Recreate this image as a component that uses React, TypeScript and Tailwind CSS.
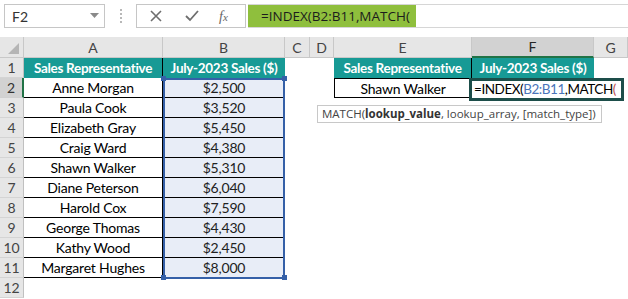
import React from "react";

const names = [
  "Anne Morgan",
  "Paula Cook",
  "Elizabeth Gray",
  "Craig Ward",
  "Shawn Walker",
  "Diane Peterson",
  "Harold Cox",
  "George Thomas",
  "Kathy Wood",
  "Margaret Hughes",
];

const sales = ["$2,500", "$3,520", "$5,450", "$4,380", "$5,310", "$6,040", "$7,590", "$4,430", "$2,450", "$8,000"];

const cols = ["A", "B", "C", "D", "E", "F", "G"];

function FormulaBar() {
  return (
    <div className="flex h-[35px] items-start pt-[4px] pl-[4px]">
      <div className="flex h-[24px] w-[101px] items-center justify-between border border-[#c6c6c6] pl-[7px] pr-[5px] text-[14px] text-[#333]">
        <span>F2</span>
        <svg width="9" height="6" viewBox="0 0 9 6">
          <path d="M0 0 L9 0 L4.5 5 Z" fill="#8a8a8a" />
        </svg>
      </div>
      <div className="flex h-[24px] w-[31px] flex-col items-center justify-center gap-[2px]">
        <span className="h-[2px] w-[2px] bg-[#b8b8b8]" />
        <span className="h-[2px] w-[2px] bg-[#b8b8b8]" />
        <span className="h-[2px] w-[2px] bg-[#b8b8b8]" />
        <span className="h-[2px] w-[2px] bg-[#b8b8b8]" />
      </div>
      <div className="flex h-[24px] w-[110px] items-center border border-[#c6c6c6] pl-[13px]">
        <svg width="12" height="12" viewBox="0 0 12 12">
          <path d="M1 1 L11 11 M11 1 L1 11" stroke="#6e6e6e" strokeWidth="1.6" />
        </svg>
        <svg className="ml-[23px]" width="14" height="12" viewBox="0 0 14 12">
          <path d="M1 6 L5 10 L13 1" stroke="#6e6e6e" strokeWidth="1.8" fill="none" />
        </svg>
        <span className="ml-[20px] font-['Liberation_Serif'] text-[14px] italic text-[#666]">
          f<span className="text-[11px]">x</span>
        </span>
      </div>
      <div className="ml-[2px] flex h-[24px] flex-1 border-y border-[#d6d6d6]">
        <div className="flex w-[168px] items-center bg-[#8fbf3d] pl-[13px] font-['Open_Sans'] text-[13.5px] text-[#1c1c1c]">
          =INDEX(B2:B11,MATCH(
        </div>
        <div className="flex-1 bg-white" />
      </div>
    </div>
  );
}

function ColHeaders() {
  return (
    <>
      <div className="relative border-r border-b border-[#c8c8c8] bg-[#e6e6e6]">
        <svg className="absolute right-[4px] bottom-[3px]" width="11" height="11" viewBox="0 0 11 11">
          <path d="M11 0 L11 11 L0 11 Z" fill="#b5b5b5" />
        </svg>
      </div>
      {cols.map((c) => (
        <div
          key={c}
          className={
            c === "F"
              ? "flex items-center justify-center border-r border-b-2 border-r-[#c8c8c8] border-b-[#217346] bg-[#d2d2d2] text-[14px] text-[#262626]"
              : "flex items-center justify-center border-r border-b border-[#c8c8c8] bg-[#e6e6e6] text-[14px] text-[#444]"
          }
        >
          {c}
        </div>
      ))}
    </>
  );
}

function RowHeader({ n }: { n: number }) {
  return (
    <div
      className={
        n === 2
          ? "flex items-center justify-center border-b border-b-[#d0d0d0] border-r-2 border-r-[#217346] bg-[#d2d2d2] text-[14px] text-[#333]"
          : "flex items-center justify-center border-b border-r border-b-[#d4d4d4] border-r-[#c0c0c0] bg-[#e6e6e6] text-[14px] text-[#444]"
      }
    >
      {n}
    </div>
  );
}

const headCell =
  "flex items-center justify-center whitespace-nowrap bg-[#179a95] text-[13.5px] font-bold tracking-[-0.3px] text-white";

export default function App() {
  return (
    <div className="relative h-[299px] w-[628px] overflow-hidden bg-white font-['Lato'] text-black">
      <FormulaBar />
      <div className="mt-[2px] grid grid-cols-[24px_139px_122px_25px_24px_138px_122px_1fr] grid-rows-[21px_repeat(12,20px)]">
        <ColHeaders />

        {/* row 1 */}
        <RowHeader n={1} />
        <div className={headCell + " border-r border-black"}>Sales Representative</div>
        <div className={headCell}>July-2023 Sales ($)</div>
        <div />
        <div />
        <div className={headCell + " border-r border-black"}>Sales Representative</div>
        <div className={headCell}>July-2023 Sales ($)</div>
        <div />

        {names.map((name, i) => (
          <React.Fragment key={name}>
            <RowHeader n={i + 2} />
            <div className="flex items-center justify-center border-r border-b border-black text-[14px] tracking-[-0.2px]">
              {name}
            </div>
            <div className="flex items-center justify-center border-b border-black bg-[#e8edf7] text-[14px] tracking-[-0.2px] text-[#222]">
              {sales[i]}
            </div>
            <div />
            <div />
            {i === 0 ? (
              <div className="flex items-center justify-center border border-black text-[14px] tracking-[-0.2px]">
                Shawn Walker
              </div>
            ) : (
              <div />
            )}
            <div />
            <div />
          </React.Fragment>
        ))}

        <RowHeader n={12} />
      </div>

      {/* selection B2:B11 */}
      <div className="absolute left-[163px] top-[78px] h-[201px] w-[122px] border-2 border-[#3560a8]" />
      <span className="absolute left-[161px] top-[76px] h-[5px] w-[5px] bg-[#3560a8]" />
      <span className="absolute left-[282px] top-[76px] h-[5px] w-[5px] bg-[#3560a8]" />
      <span className="absolute left-[161px] top-[275px] h-[5px] w-[5px] bg-[#3560a8]" />
      <span className="absolute left-[282px] top-[275px] h-[5px] w-[5px] bg-[#3560a8]" />

      {/* editing cell F2 */}
      <div className="absolute left-[469px] top-[78px] flex h-[23px] w-[155px] items-center whitespace-nowrap border-[3px] border-[#1d4e4a] bg-white pl-[2px] text-[13.5px] tracking-[-0.45px]">
        =INDEX(<span className="text-[#4a74b9]">B2:B11</span>,MATCH<span className="text-[#c0504d]">(</span>
      </div>

      {/* function tooltip */}
      <div className="absolute left-[317px] top-[105px] flex h-[18px] w-[285px] items-center border border-[#c8c8c8] bg-white pl-[4px] font-['Open_Sans'] text-[11.5px] text-[#444]">
        MATCH(<b className="font-bold text-[#333]">lookup_value</b>, lookup_array, [match_type])
      </div>
    </div>
  );
}
